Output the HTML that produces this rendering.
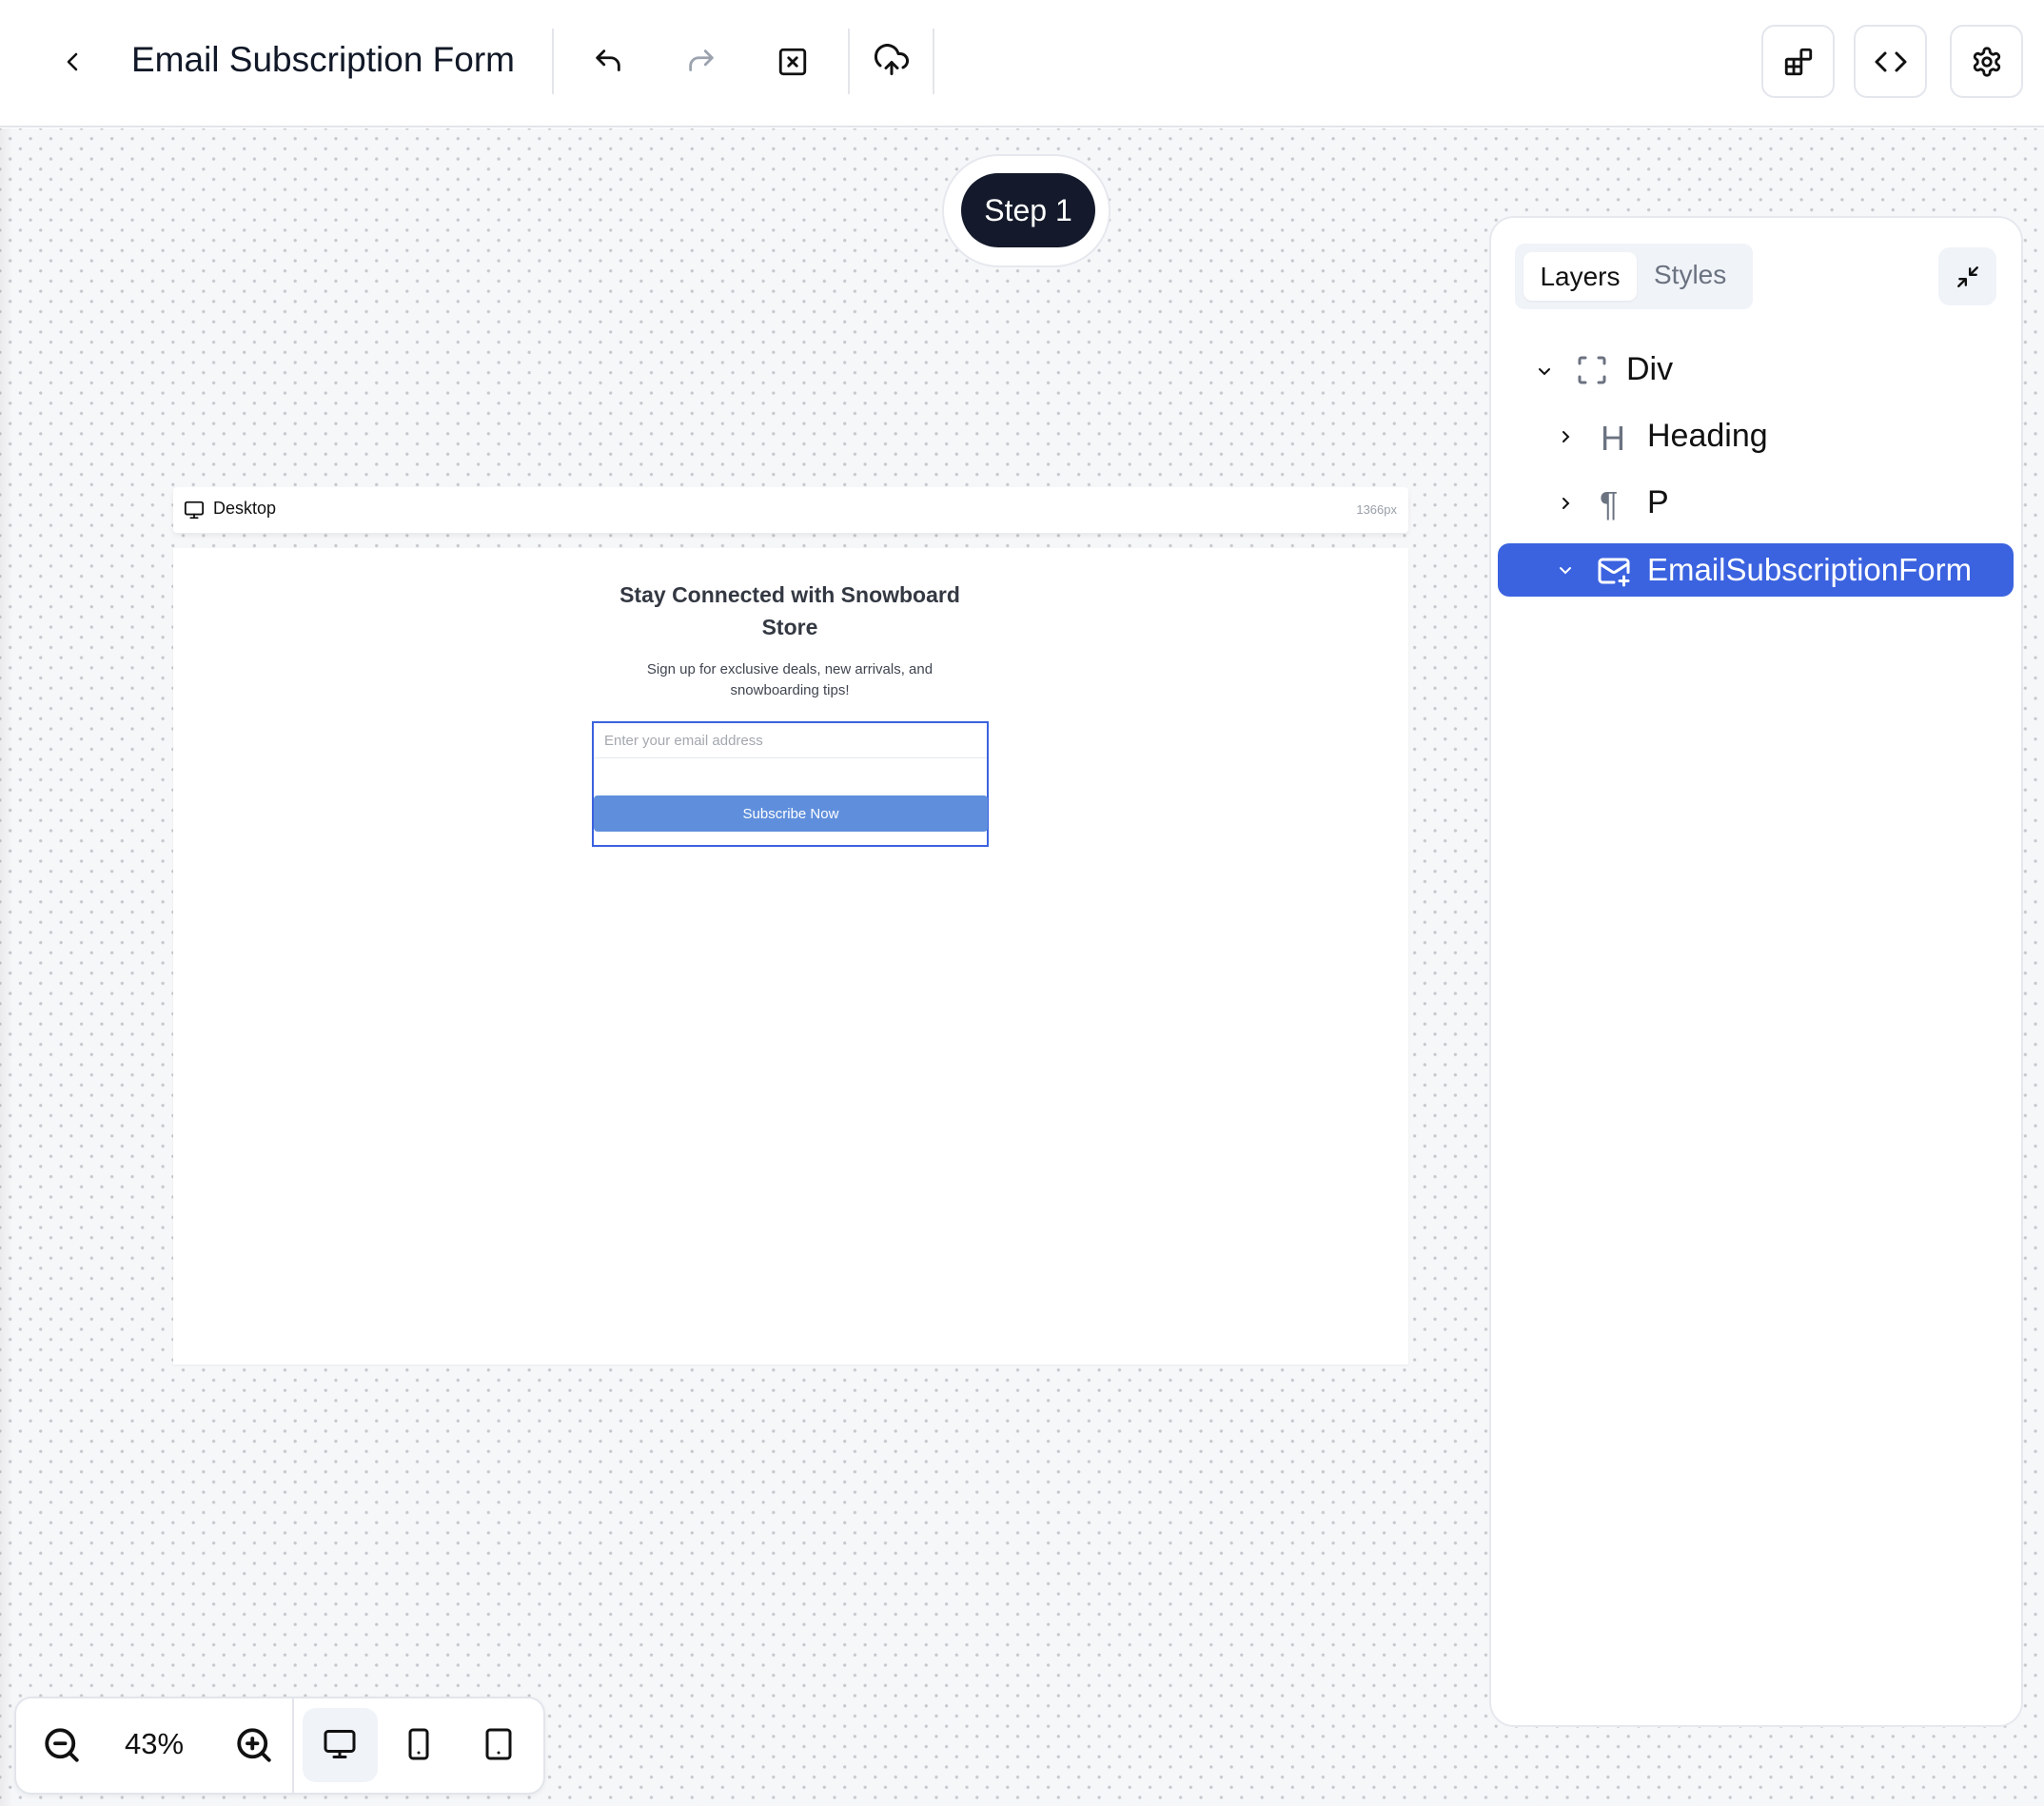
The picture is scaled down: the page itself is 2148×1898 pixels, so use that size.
<!DOCTYPE html>
<html><head><meta charset="utf-8"><style>
*{box-sizing:border-box;margin:0;padding:0}
body{width:2148px;height:1898px;overflow:hidden;font-family:"Liberation Sans",sans-serif;background:#fff;position:relative;color:#111827}
.abs{position:absolute}
#hdr{left:0;top:0;width:2148px;height:134px;background:#fff;border-bottom:2px solid #e3e5ea}
#canvas{left:0;top:135px;width:2148px;height:1763px;background-color:#f6f7f9;background-image:radial-gradient(circle,#c6c8cd 1.4px,transparent 1.9px),radial-gradient(circle,#c6c8cd 1.4px,transparent 1.9px);background-size:21.4px 21.4px,21.4px 21.4px;background-position:0 0,10.7px 10.7px}
.vdiv{width:2px;background:#e3e5ea;top:30px;height:69px}
.tbtn{top:26px;width:77px;height:77px;border:2px solid #e3e6ec;border-radius:14px;background:#fff;display:flex;align-items:center;justify-content:center}
svg{display:block}
</style></head><body>
<div id="hdr" class="abs">
 <svg class="abs" style="left:66px;top:53px" width="22" height="24" viewBox="0 0 22 24"><path d="M14 4 L6 12 L14 20" fill="none" stroke="#111" stroke-width="2.6" stroke-linecap="round" stroke-linejoin="round"/></svg>
 <div class="abs" style="left:138px;top:42px;font-size:37px;font-weight:500;color:#111827;white-space:nowrap">Email Subscription Form</div>
 <div class="abs vdiv" style="left:580px"></div>
 <svg class="abs" style="left:622px;top:48px" width="34" height="34" viewBox="0 0 24 24"><path d="M9 14 L4 9 L9 4 M4 9 H14 a6 6 0 0 1 6 6 v3" fill="none" stroke="#111" stroke-width="2" stroke-linecap="round" stroke-linejoin="round"/></svg>
 <svg class="abs" style="left:720px;top:48px" width="34" height="34" viewBox="0 0 24 24"><path d="M15 14 L20 9 L15 4 M20 9 H10 a6 6 0 0 0 -6 6 v3" fill="none" stroke="#9ca3af" stroke-width="2" stroke-linecap="round" stroke-linejoin="round"/></svg>
 <svg class="abs" style="left:816px;top:48px" width="34" height="34" viewBox="0 0 24 24"><rect x="3" y="3" width="18" height="18" rx="2" fill="none" stroke="#111" stroke-width="2"/><path d="M9 9 L15 15 M15 9 L9 15" stroke="#111" stroke-width="2" stroke-linecap="round"/></svg>
 <div class="abs vdiv" style="left:891px"></div>
 <svg class="abs" style="left:919px;top:46px" width="36" height="36" viewBox="0 0 24 24"><path d="M12 13 v8 M8 17 l4 -4 4 4 M20 16.6 A5 5 0 0 0 18 7 h-1.3 A8 8 0 1 0 4 15.3" fill="none" stroke="#111" stroke-width="2" stroke-linecap="round" stroke-linejoin="round"/></svg>
 <div class="abs vdiv" style="left:980px"></div>
 <div class="abs tbtn" style="left:1851px"><svg width="34" height="34" viewBox="0 0 24 24" fill="none" stroke="#111" stroke-width="2" stroke-linejoin="round"><rect x="3" y="10" width="11" height="11" rx="1"/><path d="M3 15.5 H14 M8.5 10 V21"/><rect x="14" y="3" width="7" height="7" rx="1"/></svg></div>
 <div class="abs tbtn" style="left:1948px"><svg width="36" height="36" viewBox="0 0 24 24" fill="none" stroke="#111" stroke-width="2" stroke-linecap="round" stroke-linejoin="round"><path d="M8 6 L2 12 L8 18 M16 6 L22 12 L16 18"/></svg></div>
 <div class="abs tbtn" style="left:2049px"><svg width="34" height="34" viewBox="0 0 24 24" fill="none" stroke="#111" stroke-width="2" stroke-linecap="round" stroke-linejoin="round"><path d="M12.22 2h-.44a2 2 0 0 0-2 2v.18a2 2 0 0 1-1 1.73l-.43.25a2 2 0 0 1-2 0l-.15-.08a2 2 0 0 0-2.730.73l-.22.38a2 2 0 0 0 .73 2.73l.15.1a2 2 0 0 1 1 1.72v.51a2 2 0 0 1-1 1.740l-.15.09a2 2 0 0 0-.73 2.73l.22.38a2 2 0 0 0 2.73.73l.15-.08a2 2 0 0 1 2 0l.43.25a2 2 0 0 1 1 1.73V20a2 2 0 0 0 2 2h.44a2 2 0 0 0 2-2v-.18a2 2 0 0 1 1-1.73l.43-.25a2 2 0 0 1 2 0l.15.08a2 2 0 0 0 2.73-.73l.22-.39a2 2 0 0 0-.73-2.73l-.15-.08a2 2 0 0 1-1-1.74v-.5a2 2 0 0 1 1-1.74l.15-.09a2 2 0 0 0 .73-2.73l-.22-.38a2 2 0 0 0-2.73-.73l-.15.08a2 2 0 0 1-2 0l-.43-.25a2 2 0 0 1-1-1.73V4a2 2 0 0 0-2-2z"/><circle cx="12" cy="12" r="3"/></svg></div>
</div>
<div id="canvas" class="abs"></div>
<div class="abs" style="left:0;top:135px;width:14px;height:1763px;background:linear-gradient(90deg,rgba(0,0,0,0.05),rgba(0,0,0,0))"></div>

<div class="abs" style="left:990px;top:162px;width:177px;height:119px;border-radius:60px;background:#fff;border:2px solid #e6e8ee"></div>
<div class="abs" style="left:1010px;top:182px;width:141px;height:78px;border-radius:39px;background:#141a2b;color:#fff;font-size:32px;display:flex;align-items:center;justify-content:center">Step 1</div>

<div class="abs" style="left:182px;top:512px;width:1298px;height:48px;background:#fff;border-radius:4px;box-shadow:0 3px 6px rgba(0,0,0,0.06)"></div>
<svg class="abs" style="left:193px;top:525px" width="22" height="22" viewBox="0 0 24 24" fill="none" stroke="#111" stroke-width="2" stroke-linecap="round"><rect x="2" y="3" width="20" height="14" rx="2"/><path d="M8 21h8M12 17v4"/></svg>
<div class="abs" style="left:224px;top:524px;font-size:18px;color:#111">Desktop</div>
<div class="abs" style="left:1400px;top:528px;width:68px;text-align:right;font-size:13px;color:#9aa0a8">1366px</div>
<div class="abs" style="left:182px;top:576px;width:1298px;height:858px;background:#fff;box-shadow:0 1px 3px rgba(0,0,0,0.05)"></div>
<div class="abs" style="left:560px;top:608px;width:540px;text-align:center;font-size:23px;font-weight:bold;color:#333842;line-height:34px">Stay Connected with Snowboard<br>Store</div>
<div class="abs" style="left:560px;top:693px;width:540px;text-align:center;font-size:15px;color:#404550;line-height:22px">Sign up for exclusive deals, new arrivals, and<br>snowboarding tips!</div>
<div class="abs" style="left:622px;top:758px;width:417px;height:132px;border:2px solid #3b62df"></div>
<div class="abs" style="left:625px;top:761px;width:412px;height:36px;border-bottom:1px solid #e8e9ec;font-size:15px;color:#a3a7ae;padding:9px 0 0 10px">Enter your email address</div>
<div class="abs" style="left:624px;top:836px;width:414px;height:38px;background:#5f8fdc;border-radius:4px;color:#fff;font-size:15px;display:flex;align-items:center;justify-content:center">Subscribe Now</div>

<div class="abs" style="left:1565px;top:227px;width:561px;height:1588px;background:#fff;border:2px solid #e6e8ee;border-radius:26px"></div>
<div class="abs" style="left:1592px;top:256px;width:250px;height:69px;background:#f0f3f8;border-radius:10px"></div>
<div class="abs" style="left:1601px;top:265px;width:119px;height:51px;background:#fff;border-radius:9px;box-shadow:0 1px 2px rgba(0,0,0,0.06);font-size:28px;color:#111;display:flex;align-items:center;justify-content:center">Layers</div>
<div class="abs" style="left:1738px;top:273px;font-size:28px;color:#6b7280">Styles</div>
<div class="abs" style="left:2037px;top:260px;width:61px;height:61px;background:#f0f3f8;border-radius:12px;display:flex;align-items:center;justify-content:center"><svg width="26" height="26" viewBox="0 0 24 24" fill="none" stroke="#111" stroke-width="2.2" stroke-linecap="round" stroke-linejoin="round"><path d="M3 21 L10 14 M4 14 H10 V20 M21 3 L14 10 M14 4 V10 H20"/></svg></div>

<svg class="abs" style="left:1613px;top:380px" width="20" height="20" viewBox="0 0 20 20"><path d="M5 8 L10 13 L15 8" fill="none" stroke="#111" stroke-width="2" stroke-linecap="round"/></svg>
<svg class="abs" style="left:1657px;top:373px" width="32" height="32" viewBox="0 0 32 32" fill="none" stroke="#6b7280" stroke-width="3" stroke-linecap="round"><path d="M3 9 V5 a2 2 0 0 1 2-2 H9 M23 3 H27 a2 2 0 0 1 2 2 V9 M29 23 V27 a2 2 0 0 1-2 2 H23 M9 29 H5 a2 2 0 0 1-2-2 V23"/></svg>
<div class="abs" style="left:1709px;top:369px;font-size:34px;color:#111">Div</div>

<svg class="abs" style="left:1635px;top:449px" width="20" height="20" viewBox="0 0 20 20"><path d="M8 5 L13 10 L8 15" fill="none" stroke="#111" stroke-width="2" stroke-linecap="round"/></svg>
<div class="abs" style="left:1682px;top:440px;font-size:36px;color:#6b7280;font-weight:300">H</div>
<div class="abs" style="left:1731px;top:439px;font-size:34px;color:#111">Heading</div>

<svg class="abs" style="left:1635px;top:519px" width="20" height="20" viewBox="0 0 20 20"><path d="M8 5 L13 10 L8 15" fill="none" stroke="#111" stroke-width="2" stroke-linecap="round"/></svg>
<div class="abs" style="left:1681px;top:509px;font-size:36px;color:#6b7280">¶</div>
<div class="abs" style="left:1731px;top:509px;font-size:34px;color:#111">P</div>

<div class="abs" style="left:1574px;top:571px;width:542px;height:56px;background:#3b63e0;border-radius:12px"></div>
<svg class="abs" style="left:1635px;top:589px" width="20" height="20" viewBox="0 0 20 20"><path d="M5 8 L10 13 L15 8" fill="none" stroke="#fff" stroke-width="2" stroke-linecap="round"/></svg>
<svg class="abs" style="left:1678px;top:582px" width="36" height="36" viewBox="0 0 24 24" fill="none" stroke="#fff" stroke-width="2" stroke-linecap="round" stroke-linejoin="round"><path d="M22 13 V6 a2 2 0 0 0-2-2 H4 a2 2 0 0 0-2 2 v12 a2 2 0 0 0 2 2 h8"/><path d="M22 7 L13 12.7 a2 2 0 0 1-2 0 L2 7"/><path d="M19 16 v6 M16 19 h6"/></svg>
<div class="abs" style="left:1731px;top:580px;font-size:33px;color:#fff">EmailSubscriptionForm</div>

<div class="abs" style="left:15px;top:1783px;width:558px;height:103px;background:#fff;border:2px solid #e3e5ec;border-radius:18px;box-shadow:0 2px 6px rgba(0,0,0,0.05)"></div>
<div class="abs" style="left:307px;top:1785px;width:2px;height:99px;background:#e3e5ec"></div>
<svg class="abs" style="left:44px;top:1813px" width="42" height="42" viewBox="0 0 24 24" fill="none" stroke="#111" stroke-width="2.2" stroke-linecap="round"><circle cx="11" cy="11" r="8"/><path d="M21 21 L16.7 16.7 M8 11 h6"/></svg>
<div class="abs" style="left:131px;top:1815px;font-size:31px;color:#111">43%</div>
<svg class="abs" style="left:246px;top:1813px" width="42" height="42" viewBox="0 0 24 24" fill="none" stroke="#111" stroke-width="2.2" stroke-linecap="round"><circle cx="11" cy="11" r="8"/><path d="M21 21 L16.7 16.7 M8 11 h6 M11 8 v6"/></svg>
<div class="abs" style="left:318px;top:1795px;width:79px;height:78px;background:#f0f3f8;border-radius:14px"></div>
<svg class="abs" style="left:339px;top:1815px" width="36" height="36" viewBox="0 0 24 24" fill="none" stroke="#111" stroke-width="2" stroke-linecap="round"><rect x="2" y="3" width="20" height="14" rx="2"/><path d="M8 21h8M12 17v4"/></svg>
<svg class="abs" style="left:422px;top:1815px" width="36" height="36" viewBox="0 0 24 24" fill="none" stroke="#111" stroke-width="2" stroke-linecap="round"><rect x="6" y="2" width="12" height="20" rx="2"/><path d="M12 18h.01"/></svg>
<svg class="abs" style="left:506px;top:1815px" width="36" height="36" viewBox="0 0 24 24" fill="none" stroke="#111" stroke-width="2" stroke-linecap="round"><rect x="4" y="2" width="16" height="20" rx="2"/><path d="M12 18h.01"/></svg>
</body></html>
